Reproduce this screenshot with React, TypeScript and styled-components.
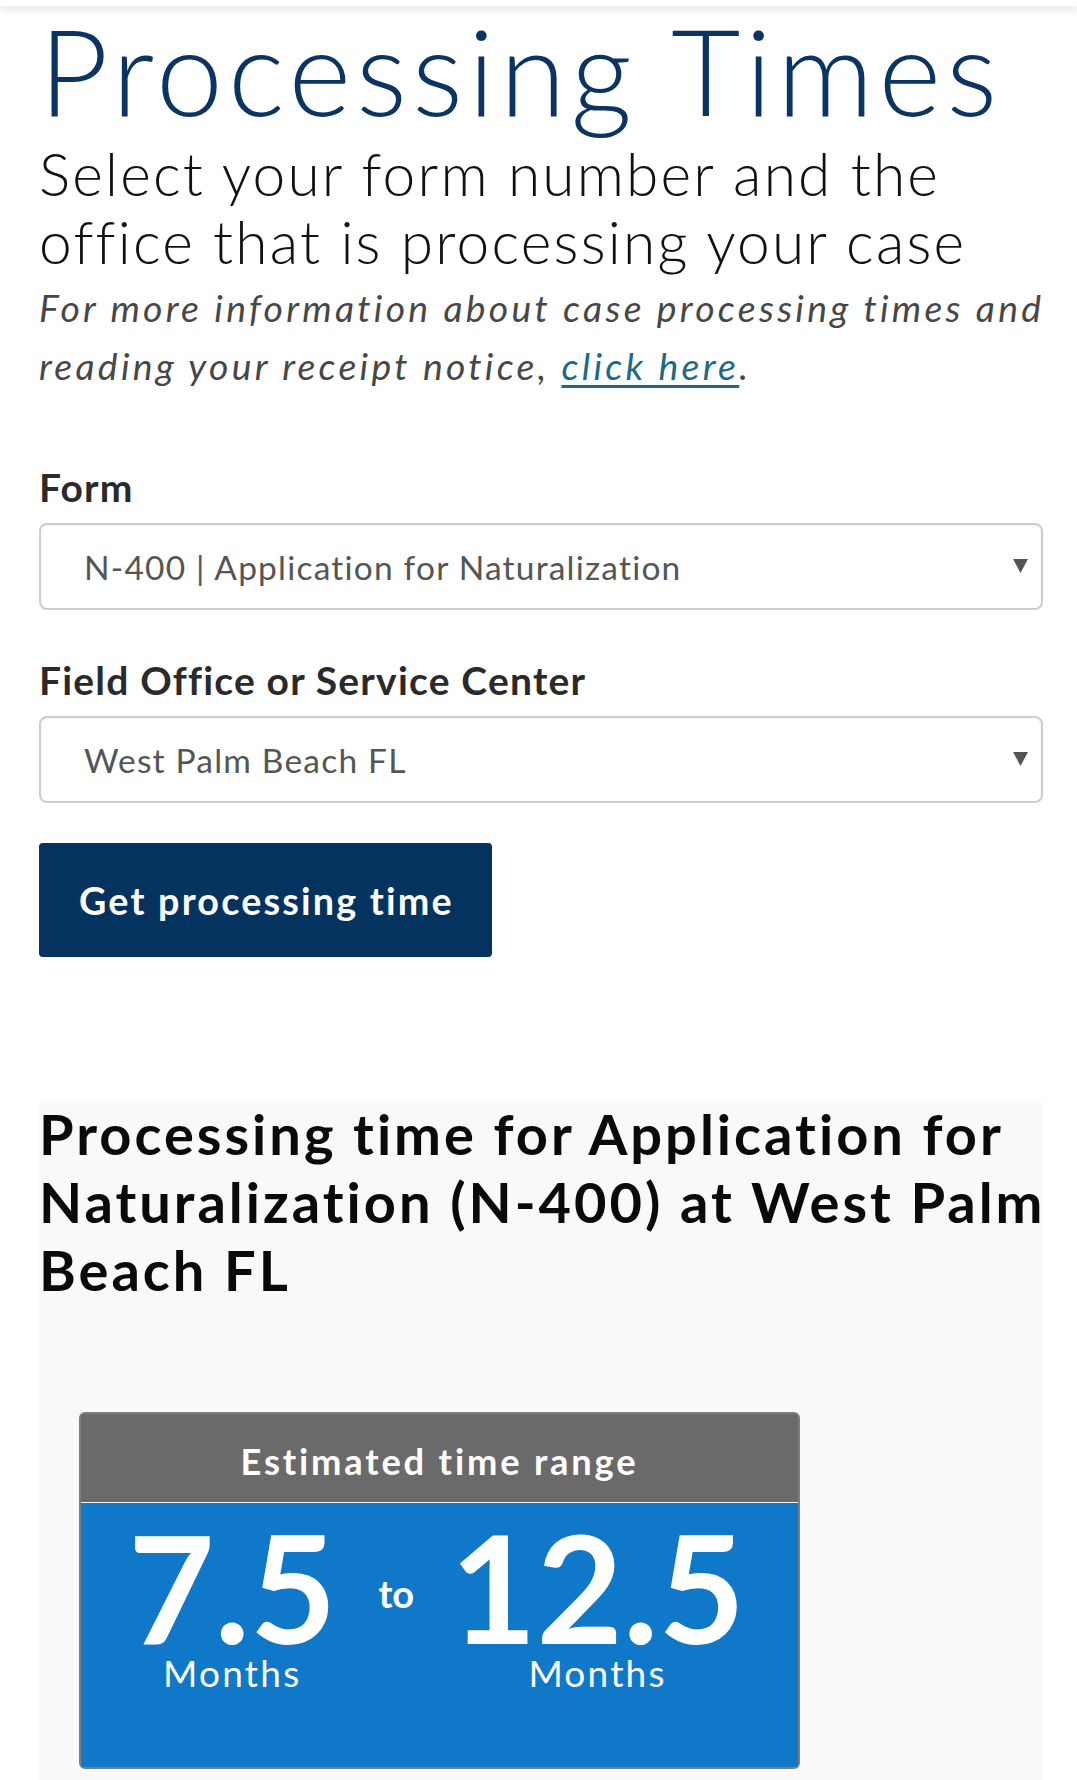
import React from "react";
import styled, { createGlobalStyle } from "styled-components";

const GlobalStyle = createGlobalStyle`
  html, body { margin: 0; padding: 0; background: #ffffff; }
  body { font-family: "Lato", "Open Sans", sans-serif; color: #1a1a1a; }
  * { box-sizing: border-box; }
`;

const Page = styled.div`
  min-height: 1780px;
  background: #ffffff;
`;

const TopBar = styled.div`
  height: 6px;
  background: #ffffff;
  box-shadow: 0 3px 9px rgba(0, 0, 0, 0.14);
  position: relative;
  z-index: 1;
`;

const Main = styled.main`
  padding: 0 35px 0 39px;
  display: flex;
  flex-direction: column;
`;

const Title = styled.h1`
  margin: 4px 0 0 0;
  font-family: "Lato", sans-serif;
  font-weight: 300;
  font-size: 120px;
  line-height: 120px;
  color: #0a3463;
  letter-spacing: 5px;
  white-space: nowrap;
`;

const Subtitle = styled.h2`
  margin: 9px 0 0 0;
  font-family: "Lato", sans-serif;
  font-weight: 300;
  font-size: 58.6px;
  line-height: 68px;
  letter-spacing: 2.2px;
  color: #111111;
  white-space: nowrap;
`;

const Note = styled.p`
  margin: 4px 0 0 0;
  font-family: "Lato", sans-serif;
  font-style: italic;
  font-weight: 400;
  font-size: 37.3px;
  line-height: 58px;
  letter-spacing: 3.3px;
  color: #474747;
  white-space: nowrap;
`;

const NoteLink = styled.a`
  color: #1b6a8a;
  text-decoration: underline;
  text-decoration-thickness: 3px;
  text-underline-offset: 5px;
`;

const Field = styled.div<{ $top: number }>`
  margin-top: ${(p) => p.$top}px;
  display: flex;
  flex-direction: column;
  gap: 12px;
`;

const Label = styled.label`
  font-family: "Lato", sans-serif;
  font-weight: 700;
  font-size: 39px;
  line-height: 48px;
  letter-spacing: 1.2px;
  color: #2a2a2a;
`;

const SelectWrap = styled.div`
  position: relative;
  width: 1004px;
`;

const Select = styled.select`
  appearance: none;
  -webkit-appearance: none;
  width: 100%;
  height: 87px;
  padding: 0 60px 0 43px;
  border: 2px solid #cdcdcd;
  border-radius: 8px;
  background: #ffffff;
  box-shadow: inset 0 1px 3px rgba(0, 0, 0, 0.06);
  font-family: "Lato", sans-serif;
  font-weight: 400;
  font-size: 33.5px;
  letter-spacing: 1.2px;
  color: #555555;
  outline: none;
`;

const Arrow = styled.svg`
  position: absolute;
  right: 15px;
  top: 36px;
  width: 15px;
  height: 14px;
  pointer-events: none;
`;

const Button = styled.button`
  margin-top: 40px;
  align-self: flex-start;
  height: 114px;
  padding: 0 38px 0 40px;
  border: none;
  border-radius: 4px;
  background: #04335f;
  color: #ffffff;
  font-family: "Lato", sans-serif;
  font-weight: 700;
  font-size: 37.7px;
  letter-spacing: 2.2px;
  cursor: pointer;
`;

const Results = styled.section`
  margin-top: 146px;
  background: #f9f9f9;
  padding: 0 0 20px 0;
  width: 1004px;
`;

const ResultsHeading = styled.h2`
  margin: -3px 0 0 0;
  font-family: "Lato", sans-serif;
  font-weight: 700;
  font-size: 56px;
  line-height: 68px;
  letter-spacing: 3px;
  color: #0a0a0a;
  white-space: nowrap;
`;

const Card = styled.div`
  margin: 108px 0 0 40px;
  width: 721px;
  border: 2px solid #7b7f84;
  border-radius: 6px;
  overflow: hidden;
  background: #0f78c8;
`;

const CardHeader = styled.div`
  height: 89px;
  background: #6a6a6a;
  border-bottom: 1px solid #f2f2f2;
  display: flex;
  align-items: center;
  justify-content: center;
  font-family: "Lato", sans-serif;
  font-weight: 700;
  font-size: 36.3px;
  letter-spacing: 2.8px;
  color: #ffffff;
  padding-top: 6px;
`;

const CardBody = styled.div`
  background: #0f78c8;
  padding: 15px 6px 79px 0;
  display: flex;
  justify-content: center;
  align-items: flex-start;
  color: #ffffff;
`;

const Group = styled.div`
  display: flex;
  flex-direction: column;
  align-items: center;
`;

const Big = styled.div`
  font-family: "Lato", sans-serif;
  font-weight: 700;
  font-size: 149px;
  line-height: 137px;
`;

const Unit = styled.div`
  margin-top: 3px;
  font-family: "Lato", sans-serif;
  font-weight: 400;
  font-size: 37px;
  line-height: 30px;
  letter-spacing: 2.2px;
`;

const To = styled.div`
  margin: 56px 36px 0 42px;
  font-family: "Lato", sans-serif;
  font-weight: 700;
  font-size: 38px;
  line-height: 38px;
`;

const DropArrow = () => (
  <Arrow viewBox="0 0 15 14">
    <polygon points="0,0 15,0 7.5,14" fill="#555555" />
  </Arrow>
);

export default function App() {
  return (
    <Page>
      <GlobalStyle />
      <TopBar />
      <Main>
        <Title>Processing Times</Title>
        <Subtitle>
          Select your form number and the
          <br />
          office that is processing your case
        </Subtitle>
        <Note>
          For more information about case processing times and
          <br />
          reading your receipt notice, <NoteLink href="#">click here</NoteLink>.
        </Note>

        <Field $top={68}>
          <Label htmlFor="form">Form</Label>
          <SelectWrap>
            <Select id="form" defaultValue="n400">
              <option value="n400">N-400 | Application for Naturalization</option>
            </Select>
            <DropArrow />
          </SelectWrap>
        </Field>

        <Field $top={46}>
          <Label htmlFor="office">Field Office or Service Center</Label>
          <SelectWrap>
            <Select id="office" defaultValue="wpb">
              <option value="wpb">West Palm Beach FL</option>
            </Select>
            <DropArrow />
          </SelectWrap>
        </Field>

        <Button type="button">Get processing time</Button>

        <Results>
          <ResultsHeading>
            Processing time for Application for
            <br />
            Naturalization (N-400) at West Palm
            <br />
            Beach FL
          </ResultsHeading>
          <Card>
            <CardHeader>Estimated time range</CardHeader>
            <CardBody>
              <Group>
                <Big>7.5</Big>
                <Unit>Months</Unit>
              </Group>
              <To>to</To>
              <Group>
                <Big>12.5</Big>
                <Unit>Months</Unit>
              </Group>
            </CardBody>
          </Card>
        </Results>
      </Main>
    </Page>
  );
}
